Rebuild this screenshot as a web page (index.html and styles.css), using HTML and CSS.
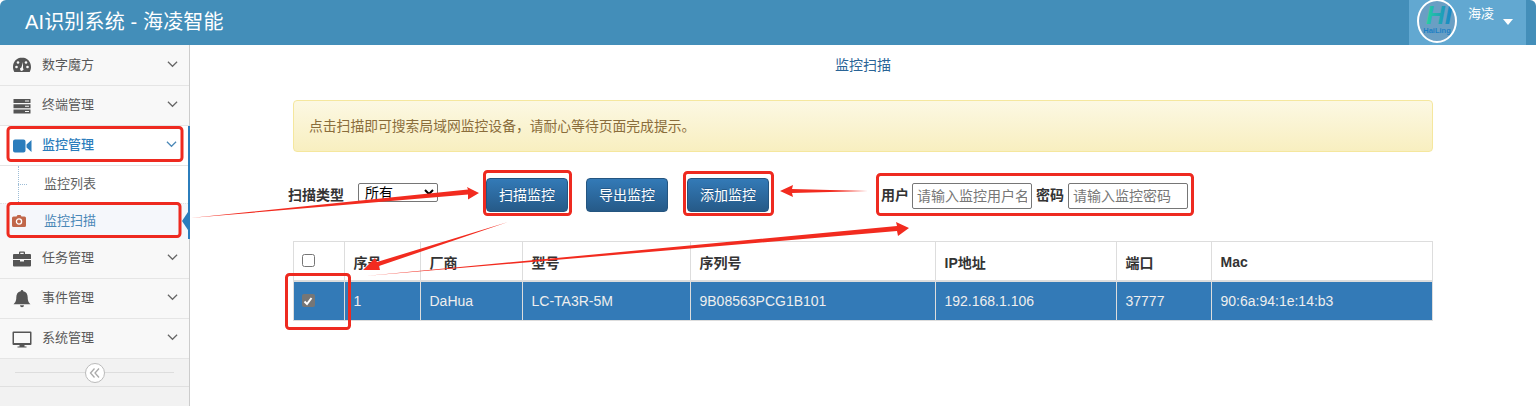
FILE: index.html
```html
<!DOCTYPE html>
<html lang="zh-CN">
<head>
<meta charset="utf-8">
<title>AI识别系统 - 海凌智能</title>
<link rel="stylesheet" href="styles.css">
</head>
<body>
<header class="navbar">
  <div class="brand">AI识别系统 - 海凌智能</div>
  <div class="user">
    <div class="avatar">
      <svg viewBox="0 0 40 44" width="40" height="44">
        <defs>
          <linearGradient id="hi" x1="0" x2="1" y1="0" y2="0"><stop offset="0" stop-color="#25d0a0"/><stop offset="1" stop-color="#1a80c8"/></linearGradient>
        </defs>
        <text x="22" y="25" text-anchor="middle" class="logo-hi" fill="url(#hi)">HI</text>
        <text x="20" y="34" text-anchor="middle" class="logo-name">HaiLing</text>
      </svg>
    </div>
    <span class="user-name">海凌</span>
    <span class="user-caret"></span>
  </div>
</header>
<div class="layout">
  <aside class="sidebar">
    <nav>
      <a class="nav-item nav-first">
        <svg class="nav-icon" viewBox="0 0 20 20"><path d="M10 2.500C4.700 2.500 1 6.800 1 12c0 1.800.5 3.500 1.300 5h15.400c.8-1.500 1.300-3.200 1.300-5 0-5.200-3.700-9.500-9-9.500z" fill="#555"/><path d="M11 7l-1.600 5.500a1.700 1.700 0 1 0 1.600.5z" fill="#f8f8f8"/><circle cx="4.500" cy="12" r="1.300" fill="#f8f8f8"/><circle cx="6" cy="7.500" r="1.300" fill="#f8f8f8"/><circle cx="15.500" cy="12" r="1.300" fill="#f8f8f8"/><circle cx="14" cy="7.500" r="1.300" fill="#f8f8f8"/></svg>
        <span class="nav-text">数字魔方</span>
        <svg class="chev" viewBox="0 0 12 8"><path d="M1 1.500l5 5 5-5" /></svg>
      </a>
      <a class="nav-item">
        <svg class="nav-icon" viewBox="0 0 20 20"><path d="M1.500 3h17v4h-17zM1.500 8.200h17v4h-17zM1.500 13.400h17V17.400h-17z" fill="#555"/><path d="M13 4.500h4v1h-4zM13 9.700h4v1h-4zM13 14.900h4v1h-4z" fill="#f8f8f8"/></svg>
        <span class="nav-text">终端管理</span>
        <svg class="chev" viewBox="0 0 12 8"><path d="M1 1.500l5 5 5-5" /></svg>
      </a>
      <div class="nav-group">
        <a class="nav-item nav-open">
          <svg class="nav-icon" viewBox="0 0 20 20"><path d="M1 5.500a2 2 0 0 1 2-2h8.500a2 2 0 0 1 2 2v9a2 2 0 0 1-2 2H3a2 2 0 0 1-2-2zM14.500 8.500l5-4.500v12l-5-4.500z" fill="#2b7dbc"/></svg>
          <span class="nav-text">监控管理</span>
          <svg class="chev" viewBox="0 0 12 8"><path d="M1 1.500l5 5 5-5" /></svg>
        </a>
        <div class="submenu">
          <a class="sub-item">监控列表</a>
          <a class="sub-item sub-active">
            <svg class="sub-icon" viewBox="0 0 14 12"><path d="M4.500 1.500L5.500 0h3l1 1.500H12.500A1.500 1.500 0 0 1 14 3v7.500a1.500 1.500 0 0 1-1.500 1.500h-11A1.500 1.500 0 0 1 0 10.500V3a1.500 1.500 0 0 1 1.500-1.500z" fill="#c1674a"/><circle cx="7" cy="6.500" r="2.600" fill="none" stroke="#fff" stroke-width="1.300"/></svg>
            <span class="sub-text">监控扫描</span>
          </a>
        </div>
      </div>
      <a class="nav-item">
        <svg class="nav-icon" viewBox="0 0 20 20"><path d="M7 5V3.500A1 1 0 0 1 8 2.500h4a1 1 0 0 1 1 1V5h5a1 1 0 0 1 1 1v4H1V6a1 1 0 0 1 1-1zM8.300 5h3.400V3.800H8.300zM1 11h7v1.500h4V11h7v5.500a1 1 0 0 1-1 1H2a1 1 0 0 1-1-1z" fill="#555"/></svg>
        <span class="nav-text">任务管理</span>
        <svg class="chev" viewBox="0 0 12 8"><path d="M1 1.500l5 5 5-5" /></svg>
      </a>
      <a class="nav-item">
        <svg class="nav-icon" viewBox="0 0 20 20"><path d="M10 1a1.300 1.300 0 0 1 1.300 1.300c3 .6 4.400 3 4.400 6 0 4 1.300 5.500 2.800 7H1.500c1.500-1.500 2.800-3 2.800-7 0-3 1.400-5.400 4.400-6A1.300 1.300 0 0 1 10 1zM8 16.300h4a2 2 0 0 1-4 0z" fill="#555"/></svg>
        <span class="nav-text">事件管理</span>
        <svg class="chev" viewBox="0 0 12 8"><path d="M1 1.500l5 5 5-5" /></svg>
      </a>
      <a class="nav-item">
        <svg class="nav-icon" viewBox="0 0 20 20"><path d="M1.500 2.500h17a1 1 0 0 1 1 1v11.500a1 1 0 0 1-1 1h-6v1.500h2v1h-9v-1h2V16h-6a1 1 0 0 1-1-1V3.500a1 1 0 0 1 1-1zM2 4v10h16V4z" fill="#555"/></svg>
        <span class="nav-text">系统管理</span>
        <svg class="chev" viewBox="0 0 12 8"><path d="M1 1.500l5 5 5-5" /></svg>
      </a>
    </nav>
    <div class="collapse-bar">
      <span class="collapse-btn">
        <svg viewBox="0 0 12 12" width="12" height="12"><path d="M5.500 1.500L1.500 6l4 4.500M10 1.500L6 6l4 4.500" fill="none" stroke="#aaa" stroke-width="1.300"/></svg>
      </span>
    </div>
  </aside>
  <main class="main">
    <div class="container">
      <h1 class="page-title">监控扫描</h1>
      <div class="alert">点击扫描即可搜索局域网监控设备，请耐心等待页面完成提示。</div>
      <div class="toolbar">
        <label class="tool-label">扫描类型</label>
        <select class="type-select"><option>所有</option></select>
        <button class="btn btn-scan">扫描监控</button>
        <button class="btn btn-export">导出监控</button>
        <button class="btn btn-add">添加监控</button>
        <label class="tool-label label-user">用户</label>
        <input class="text-input" placeholder="请输入监控用户名">
        <label class="tool-label label-pass">密码</label>
        <input class="text-input" placeholder="请输入监控密码">
      </div>
      <table class="grid">
        <colgroup>
          <col class="c1"><col class="c2"><col class="c3"><col class="c4"><col class="c5"><col class="c6"><col class="c7"><col class="c8">
        </colgroup>
        <thead>
          <tr>
            <th class="check-cell"><input type="checkbox" class="check"></th>
            <th>序号</th><th>厂商</th><th>型号</th><th>序列号</th><th>IP地址</th><th>端口</th><th>Mac</th>
          </tr>
        </thead>
        <tbody>
          <tr>
            <td class="check-cell"><span class="check-on"><svg viewBox="0 0 12 12" width="12" height="12"><path d="M2.500 6.500l2.500 2.500 4.500-6" fill="none" stroke="#fff" stroke-width="2"/></svg></span></td>
            <td>1</td><td>DaHua</td><td>LC-TA3R-5M</td><td>9B08563PCG1B101</td><td>192.168.1.106</td><td>37777</td><td>90:6a:94:1e:14:b3</td>
          </tr>
        </tbody>
      </table>
    </div>
  </main>
</div>
<svg class="annotations" viewBox="0 0 1536 406" width="1536" height="406">
  <g class="boxes">
    <rect x="8" y="127.500" width="174" height="33" rx="3"/>
    <rect x="8" y="203.500" width="172" height="33" rx="3"/>
    <rect x="484.500" y="171.500" width="86" height="43" rx="3"/>
    <rect x="684.500" y="172.500" width="88" height="42" rx="3"/>
    <rect x="877.500" y="174.500" width="315" height="40" rx="3"/>
    <rect x="286.500" y="274.500" width="63" height="54" rx="3"/>
  </g>
  <g class="arrows">
    <path d="M190 218L468 189.500 467 187 479 193 468 199.500 468 194.500z"/>
    <path d="M508 222L377 262 375 258 363 270 380 270 379 266z"/>
    <path d="M365 276L897 226 896 222 909 228 898 236 897 231z"/>
    <path d="M868 191L792 189 793 185 780 191 793 197 792 193z"/>
  </g>
</svg>
</body>
</html>
```

FILE: styles.css
```css
* { box-sizing: border-box; }
html, body { margin: 0; height: 406px; overflow: hidden; }
body {
  position: relative;
  background: #fff;
  font-family: "Liberation Sans", "Noto Sans CJK SC", sans-serif;
  font-size: 13px;
  color: #333;
}
.navbar {
  height: 45px;
  background: #438eb9;
  border-radius: 6px 6px 0 0;
  display: flex;
  justify-content: space-between;
  padding-left: 25px;
  padding-right: 10px;
}
.brand { color: #fff; font-size: 20px; letter-spacing: .15px; line-height: 45px; }
.user {
  width: 117px;
  background: #62a8d1;
  display: flex;
  padding-left: 8px;
  overflow: hidden;
}
.avatar {
  width: 40px;
  height: 44px;
  border: 2px solid #fff;
  border-radius: 50%;
  background: #6a9fc4;
  flex: none;
  overflow: hidden;
  margin-top: -1px;
}
.avatar svg { display: block; margin: -2px; }
.logo-hi { font: italic 700 26px "Liberation Sans", sans-serif; }
.logo-name { font: 700 7.500px "Liberation Sans", sans-serif; fill: #1f7fc4; }
.user-name { color: #fff; font-size: 13px; line-height: 28px; margin-left: 11px; }
.user-caret {
  width: 0; height: 0;
  border: 5.500px solid transparent;
  border-top: 6px solid #fff;
  border-bottom: 0;
  margin: 19px 0 0 9px;
}
.layout { display: flex; height: 361px; }
.sidebar {
  width: 190px;
  flex: none;
  background: #f2f2f2;
  border-right: 1px solid #ccc;
}
.nav-item {
  height: 40px;
  display: flex;
  align-items: center;
  background: #f8f8f8;
  border-bottom: 1px solid #e5e5e5;
  padding: 0 11px 0 12px;
  color: #585858;
  font-size: 13px;
}
.nav-first { height: 41px; }
.nav-icon { width: 20px; height: 20px; flex: none; }
.nav-text { margin-left: 10px; flex: 1; padding-bottom: 4px; }
.chev { width: 11px; height: 8px; fill: none; stroke: #666; stroke-width: 1.300; margin-top: -3px; }
.nav-group { border-right: 2px solid #2b7dbc; margin-right: -1px; }
.nav-open { background: #fff; color: #2b7dbc; }
.nav-open .nav-text { font-weight: 500; }
.nav-open .chev { stroke: #4b88b7; }
.submenu {
  background: #fff;
  position: relative;
}
.submenu::before {
  content: "";
  position: absolute;
  left: 18px; top: 0; bottom: 3px;
  border-left: 1px dotted #9dbdd6;
}
.sub-item {
  position: relative;
  display: flex;
  align-items: center;
  padding: 0 0 4px 44px;
  color: #616161;
  font-size: 13px;
}
.sub-item:first-child { height: 37px; }
.sub-item:first-child::before {
  content: "";
  position: absolute;
  left: 18px; top: 18px; width: 9px;
  border-top: 1px dotted #9dbdd6;
}
.sub-active {
  height: 36px;
  background: #f5f7fb;
  border-top: 1px dotted #e4e4e4;
  color: #4b88b7;
}
.sub-active::after {
  content: "";
  position: absolute;
  right: -2px; top: 5px;
  border: 12.500px solid transparent;
  border-left: 0;
  border-right: 8px solid #2b7dbc;
}
.sub-icon { position: absolute; left: 12px; top: 11px; width: 14px; height: 12px; z-index: 1; }
.collapse-bar {
  height: 28px;
  position: relative;
  border-bottom: 1px solid #e0e0e0;
  display: flex;
  align-items: center;
  justify-content: center;
}
.collapse-bar::before {
  content: "";
  position: absolute;
  left: 15px; right: 15px; top: 13px;
  border-top: 1px solid #ddd;
}
.collapse-btn {
  position: relative;
  width: 20px; height: 20px;
  border: 1px solid #bbb;
  border-radius: 50%;
  background: #fff;
  display: flex;
  align-items: center;
  justify-content: center;
}
.main { flex: 1; min-width: 0; }
.container { width: 1140px; margin: 0 auto; }
.page-title {
  margin: 0;
  height: 55px;
  padding-top: 11px;
  text-align: center;
  font-size: 14px;
  line-height: 18px;
  font-weight: 400;
  color: #2a6496;
}
.alert {
  height: 52px;
  background: linear-gradient(#fcf8e3, #f8efc0);
  border: 1px solid #f5e79e;
  border-radius: 4px;
  color: #8a6d3b;
  padding-left: 15px;
  font-size: 13.800px;
  line-height: 52px;
}
.toolbar {
  display: flex;
  align-items: center;
  height: 35px;
  margin: 25px 0 29px -5px;
}
.tool-label { font-size: 14px; font-weight: 700; color: #333; flex: none; padding-bottom: 2px; }
.type-select {
  width: 80px;
  height: 19px;
  margin: -5px 48px 0 14px;
  font-family: "Liberation Sans", "Noto Sans CJK SC", sans-serif;
  font-size: 14px;
  background: #fff;
  border: 1px solid #767676;
  border-radius: 2px;
  padding: 0 0 0 2px;
}
.btn {
  width: 82px;
  height: 34px;
  border: 1px solid #245580;
  border-radius: 4px;
  background: linear-gradient(#337ab7, #265a88);
  color: #fff;
  font-family: inherit;
  font-size: 14px;
  text-shadow: 0 -1px 0 rgba(0,0,0,.2);
  padding: 0 0 2px;
  flex: none;
}
.btn-scan { margin-right: 18px; }
.btn-export { margin-right: 19px; }
.label-user { margin-left: 112px; margin-right: 3px; }
.label-pass { margin-left: 4px; margin-right: 4px; }
.text-input {
  width: 120px;
  height: 26px;
  margin-top: 2px;
  border: 1px solid #767676;
  border-radius: 2px;
  padding: 0 4px;
  font-family: inherit;
  font-size: 14px;
  flex: none;
  background: #fff;
}
.text-input::placeholder { color: #777; }
.grid {
  width: 1139px;
  border-collapse: collapse;
  table-layout: fixed;
  font-size: 14px;
}
.c1 { width: 51px; } .c2 { width: 76px; } .c3 { width: 102px; } .c4 { width: 168px; }
.c5 { width: 245px; } .c6 { width: 181px; } .c7 { width: 95px; } .c8 { width: 221px; }
.grid th, .grid td {
  border: 1px solid #ddd;
  padding: 0 8px 0 8.500px;
  text-align: left;
}
.grid th {
  height: 39px;
  border-bottom: 2px solid #ddd;
  font-weight: 700;
  padding-top: 3px;
}
.grid td { height: 40px; background: #337ab7; color: #eee; }
.check { width: 13px; height: 13px; margin: 0 0 0 -1px; display: block; position: relative; top: -2px; }
.check-on {
  display: flex;
  align-items: center;
  justify-content: center;
  width: 13px; height: 13px;
  background: #767676;
  border-radius: 2px;
  margin-left: -1px;
}
.annotations {
  position: absolute;
  left: 0; top: 0;
  pointer-events: none;
}
.boxes rect { fill: none; stroke: #ee2a20; stroke-width: 3; }
.arrows path { fill: #f22b1f; }
```
